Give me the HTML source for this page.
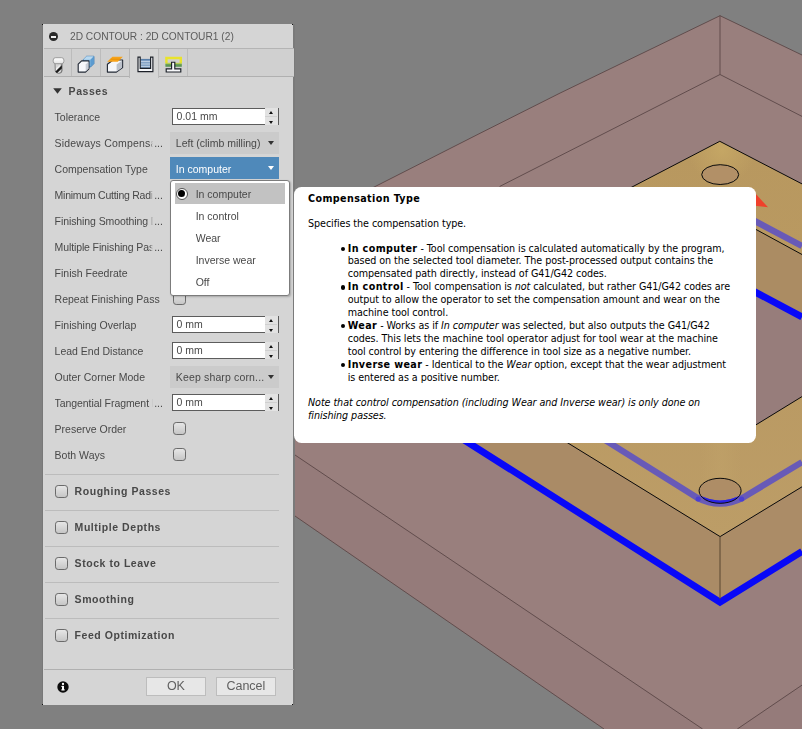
<!DOCTYPE html>
<html lang="en">
<head>
<meta charset="utf-8">
<title>2D Contour - Compensation Type</title>
<style>
*{box-sizing:border-box;margin:0;padding:0}
html,body{width:802px;height:729px;overflow:hidden;background:#808080}
body{position:relative;font-family:"Liberation Sans",Arial,sans-serif;font-size:10.5px;color:#484848}
#scene{position:absolute;left:0;top:0;width:802px;height:729px}
/* ---------- dialog ---------- */
#dlg{position:absolute;left:41.8px;top:24.2px;width:251.3px;height:680.8px;background:#d5d5d5;border-left:1px solid #787878;box-shadow:2px 0 0 #7a7a7a}
#in{position:absolute;left:1.2px;top:.8px;width:249.6px;height:679.5px;will-change:transform}
.dot{position:absolute;width:1.2px;height:1.2px;background:#111}
#title{position:absolute;left:0;top:0;width:100%;height:23.5px;border-bottom:1px solid #b4b4b4}
#title .min{position:absolute;left:5px;top:7.4px;width:9px;height:9px;border-radius:50%;background:#2a2a2a}
#title .min:after{content:"";position:absolute;left:1.9px;top:3.8px;width:5.2px;height:1.4px;background:#f2f2f2}
#title span{position:absolute;left:26px;top:5.8px;font-size:10.2px;color:#5c5c5c;white-space:nowrap}
#tabs{position:absolute;left:0;top:23.5px;width:100%;height:28.6px;background:#d0d0d0;border-bottom:1px solid #b0b0b0}
.tab{position:absolute;top:0;height:27.6px;width:29.3px;border-right:1px solid #bcbcbc}
.tab.act{background:#d5d5d5;height:29.6px;border-left:1px solid #b6b6b6;border-right:1px solid #bcbcbc}
.tab svg{position:absolute;left:0;top:0}
.sect{position:absolute;left:0;width:100%;font-weight:bold;font-size:10.5px;letter-spacing:.55px;color:#484848;white-space:nowrap}
.row{position:absolute;left:10.6px;white-space:nowrap;color:#484848;font-size:10.5px;line-height:12px}
.clip{display:inline-block;width:98px;height:13px;overflow:hidden;vertical-align:top;-webkit-mask-image:linear-gradient(to right,#000 95px,transparent 98px);mask-image:linear-gradient(to right,#000 95px,transparent 98px)}
.el{position:absolute;left:99.6px;top:0}
.sep{position:absolute;left:1px;width:234px;height:1px;background:#bcbcbc}
.num{position:absolute;left:128.2px;width:106.5px;height:16.6px;border-right:1px solid #5c5c5c;background:#e2e2e2}
.num:before{content:"";position:absolute;left:93.1px;top:8px;width:11.3px;height:1px;background:#d0d0d0}
.num i{position:absolute;left:0;top:0;width:93.1px;height:16.6px;background:#fff;border:1px solid #5c5c5c;border-right:0;font-style:normal;font-size:10.5px;line-height:15.4px;padding-left:3.4px;color:#484848}
.num b{position:absolute;left:96.6px;width:0;height:0;border-left:2.7px solid transparent;border-right:2.7px solid transparent}
.num b.u{top:2.4px;border-bottom:3.2px solid #111}
.num b.d{top:13.1px;border-top:3.2px solid #111}
.dd{position:absolute;left:125.8px;width:109px;height:22px;background:#cbcbcb;font-size:10.5px;line-height:22px;padding-top:.3px;padding-left:6px;overflow:hidden;color:#484848;white-space:nowrap}
.dd:after{content:"";position:absolute;left:98.2px;top:8.8px;border-left:3.2px solid transparent;border-right:3.2px solid transparent;border-top:4px solid #333}
.dd.sel{background:#4f89ba;color:#fff;padding-top:.9px}
.dd.sel:after{border-top-color:#fff}
.cb{position:absolute;width:13px;height:13px;border:1px solid #6a6a6a;border-radius:3.2px;background:linear-gradient(#e6e6e6,#c6c6c6)}
#pop{position:absolute;left:126.1px;top:155.4px;width:119.9px;height:115.3px;background:#fff;border:1px solid #7c7c7c;border-radius:3px;box-shadow:1px 1px 2px rgba(0,0,0,.22)}
#pop .hi{position:absolute;left:4.1px;top:2px;width:109.7px;height:21px;background:#c2c2c2}
#pop .it{position:absolute;left:24.6px;font-size:10.5px;line-height:12px;color:#484848;white-space:nowrap}
#pop .rad{position:absolute;left:4.8px;top:6.3px;width:12px;height:12px;border-radius:50%;border:1px solid #555;background:#fff}
#pop .rad:after{content:"";position:absolute;left:1.5px;top:1.5px;width:7px;height:7px;border-radius:50%;background:#000}
#foot{position:absolute;left:0;top:643.5px;width:100%;height:36px;border-top:1px solid #b0b0b0}
.btn{position:absolute;top:7.7px;height:18.6px;width:59.6px;margin-left:-.7px;background:#e7e7e7;border:1px solid #bdbdbd;font-size:12.5px;line-height:16.6px;text-align:center;color:#606060}
/* ---------- tooltip ---------- */
#tip{position:absolute;left:294.1px;top:187px;width:461.9px;height:256px;background:#fff;border-radius:7.5px;color:#000;font-family:"DejaVu Sans Condensed","DejaVu Sans","Liberation Sans",sans-serif;font-size:10.67px;line-height:12.9px;white-space:nowrap;letter-spacing:-.06px;font-stretch:condensed}
#tip div{position:absolute;left:13.9px;height:12.9px}
#tip .h{font-weight:bold;letter-spacing:.39px}
#tip b{letter-spacing:.39px}
#tip .li{left:53.6px}
#tip .bu{left:46.6px;width:4.6px;height:4.6px;border-radius:50%;background:#000}
#tip i{font-style:oblique}
</style>
</head>
<body>
<svg id="scene" viewBox="0 0 802 729">
<defs>
<linearGradient id="gTop" x1="0" x2="0" y1="141" y2="540" gradientUnits="userSpaceOnUse"><stop offset="0" stop-color="#b8985f"/><stop offset=".6" stop-color="#ba9a63"/><stop offset="1" stop-color="#bc9d67"/></linearGradient>
<radialGradient id="gHi" cx="722" cy="150" r="34" gradientUnits="userSpaceOnUse"><stop offset="0" stop-color="#c9ab66" stop-opacity=".75"/><stop offset="1" stop-color="#c9ab66" stop-opacity="0"/></radialGradient>
<linearGradient id="gStreak" x1="700" x2="742" y1="0" y2="0" gradientUnits="userSpaceOnUse"><stop offset="0" stop-color="#c4a76c" stop-opacity="0"/><stop offset=".5" stop-color="#c4a76c" stop-opacity=".3"/><stop offset="1" stop-color="#c4a76c" stop-opacity="0"/></linearGradient>
<clipPath id="cHole"><ellipse cx="720.1" cy="490.8" rx="21" ry="12.5"/></clipPath>
</defs>
<rect width="802" height="729" fill="#808080"/>
<!-- stock -->
<polygon points="720,15.7 802,55 802,729 604,729 60,354 60,347 375,186.6 480,133.3 560,93.1" fill="#997f7d"/>
<polygon points="60,297 702.6,729 604,729 60,354" fill="#957b7a"/>
<polygon points="737.3,729 802,685.1 802,729" fill="#957b7a"/>
<g stroke="#5b4747" stroke-width="1" fill="none" stroke-opacity=".9">
<path d="M60,347 L375,186.6 L480,133.3 L560,93.1 L720,15.7 L802,55"/>
<path d="M720,15.5 V74.5"/>
<path d="M499.6,186.5 L720,74.5 L802,116.4"/>
<path d="M60,297 L702.6,729"/>
<path d="M60,354 L604,729"/>
<path d="M737.3,729 L802,685.1"/>
</g>
<!-- part -->
<polygon points="719.8,141.3 802,183.9 802,486.8 720.1,536.6 400,339.7 400,308" fill="url(#gTop)"/>
<polygon points="719.8,141.3 802,183.9 802,230 640,230 640,183" fill="url(#gHi)"/>
<rect x="700" y="430" width="42" height="58" fill="url(#gStreak)"/>
<ellipse cx="720.1" cy="490.8" rx="21" ry="12.5" fill="#ae8d66"/>
<polygon points="400,339.7 720.1,536.6 720,602 400,399.4" fill="#aa8b66"/>
<polygon points="720.1,536.6 802,486.8 802,551.3 720,602" fill="#ab8c67"/>
<!-- pocket -->
<polygon points="750,226.2 802,254.5 802,320 750,292" fill="#ab8c63"/>
<polygon points="750,289.2 802,317 802,396.6 750,428.5" fill="#977d7b"/>
<!-- toolpaths -->
<path d="M700,192 L802,246" stroke="#685ab7" stroke-width="6.4" fill="none"/>
<path d="M560,411.9 L697,497.6 Q720,509.6 743,497.6 L802,462.2" stroke="#685ab7" stroke-width="6.3" fill="none" stroke-linejoin="round"/>
<g clip-path="url(#cHole)"><path d="M697,497.6 Q720,509.6 743,497.6" stroke="#2a22e6" stroke-width="6.3" fill="none"/></g>
<circle cx="698.2" cy="499" r="2.6" fill="#4a3fd2"/><circle cx="741.6" cy="499" r="2.6" fill="#4a3fd2"/>
<path d="M700,262.5 L802,317" stroke="#0808f8" stroke-width="7" fill="none"/>
<path d="M400,399.4 L720,602.2 L802,551.5" stroke="#0808f8" stroke-width="6.8" fill="none" stroke-miterlimit="10"/>
<polygon points="750,187.5 768,207.3 750,205.2" fill="#f0402a"/>
<!-- edges -->
<g stroke="#0a0a0a" stroke-width="1" fill="none">
<path d="M600,203.7 L719.8,141.3 L802,183.9"/>
<path d="M400,339.7 L720.1,536.6 L802,486.8"/>
<path d="M750,226.2 L802,254.5"/>
<path d="M750,428.5 L802,396.6"/>
<ellipse cx="720.2" cy="174.6" rx="18.5" ry="9.9" fill="#b29067"/>
<ellipse cx="720.1" cy="490.8" rx="21" ry="12.5" fill="none"/>
</g>
<path d="M720,536.6 V599" stroke="#5a4630" stroke-width="1"/>
</svg>
<div id="dlg">
<div class="dot" style="left:-1px;top:0"></div><div class="dot" style="right:0;top:0"></div><div class="dot" style="left:-1px;bottom:0"></div><div class="dot" style="right:0;bottom:0"></div>
<div id="in">
<div id="title"><div class="min"></div><span>2D CONTOUR : 2D CONTOUR1 (2)</span></div>
<div id="tabs">
<div class="tab" style="left:0px;width:27.5px"><svg width="29" height="28" viewBox="0 0 29 28"><defs><linearGradient id="t1" x1="0" x2="0" y1="0" y2="1"><stop offset="0" stop-color="#ffffff"/><stop offset="1" stop-color="#e4e4e4"/></linearGradient><linearGradient id="t2" x1="0" x2="1"><stop offset="0" stop-color="#fafafa"/><stop offset=".7" stop-color="#e2e2e2"/><stop offset="1" stop-color="#9a9a9a"/></linearGradient></defs><path d="M11.1,14.2 H18 V21.8 Q18,24.2 14.8,24.3 Q11.7,24.2 11.3,21.8 Z" fill="url(#t2)" stroke="#4a4a4a" stroke-width=".7"/><path d="M11.4,22.6 L17.8,16.2 V19.4 L13.2,24 Q11.9,23.8 11.4,22.6 Z" fill="#1a1a1a"/><path d="M12,15 L16.2,15 L12,19.4 Z" fill="#bdbdbd" opacity=".55"/><rect x="9.2" y="8.7" width="10.7" height="6" rx="2.4" fill="url(#t1)" stroke="#8c8c8c" stroke-width=".8"/></svg></div>
<div class="tab" style="left:27.5px;width:29.9px"><svg width="29" height="28" viewBox="0 0 29 28"><path d="M11.2,10.7 L14.6,7.3 H21.9 V14.6 L18.5,18 H11.2 Z" fill="#7db2dc" stroke="#2f71ad" stroke-width=".9" stroke-linejoin="round"/><path d="M11.2,10.7 L14.6,7.3 H21.9 L18.5,10.7 Z" fill="#b9d9f0"/><path d="M18.5,10.7 L21.9,7.3 V14.6 L18.5,18 Z" fill="#5c9bd0"/><path d="M6.2,15.2 L9.6,11.9 H16.9 V19.8 L13.5,23.1 H6.2 Z" fill="#f7f8fb" stroke="#232a36" stroke-width="1.15" stroke-linejoin="round"/><path d="M13.7,15.4 L16.5,12.6 V19.6 L13.7,22.4 Z" fill="#c9ced7"/></svg></div>
<div class="tab" style="left:57.4px;width:28.2px"><svg width="29" height="28" viewBox="0 0 29 28"><path d="M6.4,15.2 L12,11 H21.6 V18.6 L15.4,23.1 H6.4 Z" fill="#f5f6f9" stroke="#232a36" stroke-width="1.15" stroke-linejoin="round"/><path d="M15.6,15.5 L21.1,11.6 V18.4 L15.6,22.4 Z" fill="#bcc1ca"/><path d="M6.2,12.8 L11.4,7.8 H21.8 L16.8,12.8 Z" fill="#f7a21a"/><path d="M9.6,10.2 H19.2" stroke="#e58f06" stroke-width=".9"/></svg></div>
<div class="tab act" style="left:84.6px;width:30.4px"><svg width="31" height="28" viewBox="0 0 31 28"><rect x="10.5" y="10.2" width="9.8" height="9" fill="#7f9fc2"/><path d="M10.5,12.6 H20.3 M10.5,15 H20.3 M10.5,17.4 H20.3" stroke="#c9d8e8" stroke-width=".9"/><path d="M10.5,10.5 H20.3" stroke="#5a7fa8" stroke-width="1.2"/><path d="M8,8.1 H10.2 V19.3 H20.6 V8.1 H22.9 V22.6 H8 Z" fill="#f6f7f9" stroke="#1c2028" stroke-width="1.15" stroke-linejoin="miter"/></svg></div>
<div class="tab" style="left:114.8px;width:28.9px"><svg width="29" height="28" viewBox="0 0 29 28"><path d="M7.4,14 V9 H21.8 V14" fill="none" stroke="#e9e32c" stroke-width="2.4"/><rect x="6.4" y="15" width="16.4" height="2.8" fill="#5c9656"/><rect x="6.4" y="13.8" width="16.4" height="1.4" fill="#b5cc52"/><path d="M12.6,13.2 H15.8 V19.8 H21.8 V23 H7.2 V19.8 H12.6 Z" fill="#f6f7f9" stroke="#1c2028" stroke-width="1.15"/></svg></div>
</div>
<div class="sect" style="top:59.6px"><svg width="10" height="7" style="position:absolute;left:9.2px;top:3.6px"><path d="M0.2,0.3 H8.8 L4.5,5.8 Z" fill="#333"/></svg><span style="position:absolute;left:24.6px;top:0">Passes</span></div>
<div class="row" style="top:86.3px">Tolerance</div>
<div class="num" style="top:83.2px"><i>0.01 mm</i><b class="u"></b><b class="d"></b></div>
<div class="row" style="top:112.3px"><span class="clip" style="letter-spacing:0.19px">Sideways Compensa</span><span class="el">...</span></div>
<div class="dd" style="top:106.9px">Left (climb milling)</div>
<div class="row" style="top:138.3px">Compensation Type</div>
<div class="dd sel" style="top:132.2px">In computer</div>
<div class="row" style="top:164.3px"><span class="clip" style="letter-spacing:-0.25px">Minimum Cutting Radi</span><span class="el">...</span></div>
<div class="row" style="top:190.3px"><span class="clip" style="letter-spacing:-0.09px">Finishing Smoothing D</span><span class="el">...</span></div>
<div class="row" style="top:216.3px"><span class="clip" style="letter-spacing:-0.12px">Multiple Finishing Pass</span><span class="el">...</span></div>
<div class="row" style="top:242.3px">Finish Feedrate</div>
<div class="row" style="top:268.3px">Repeat Finishing Pass</div>
<div class="cb" style="left:128.5px;top:267.4px"></div>
<div class="row" style="top:294.3px">Finishing Overlap</div>
<div class="num" style="top:291.2px"><i>0 mm</i><b class="u"></b><b class="d"></b></div>
<div class="row" style="top:320.3px">Lead End Distance</div>
<div class="num" style="top:317.2px"><i>0 mm</i><b class="u"></b><b class="d"></b></div>
<div class="row" style="top:346.3px">Outer Corner Mode</div>
<div class="dd" style="top:340.9px;letter-spacing:.15px">Keep sharp corn...</div>
<div class="row" style="top:372.3px"><span class="clip" style="letter-spacing:-0.07px">Tangential Fragment E</span><span class="el">...</span></div>
<div class="num" style="top:369.2px"><i>0 mm</i><b class="u"></b><b class="d"></b></div>
<div class="row" style="top:398.3px">Preserve Order</div>
<div class="cb" style="left:128.5px;top:397.4px"></div>
<div class="row" style="top:424.3px">Both Ways</div>
<div class="cb" style="left:128.5px;top:423.4px"></div>
<div class="sep" style="top:449.2px"></div>
<div class="cb" style="left:10.6px;top:459.6px"></div>
<div class="sect" style="top:459.8px"><span style="position:absolute;left:30.6px;top:0">Roughing Passes</span></div>
<div class="sep" style="top:485.2px"></div>
<div class="cb" style="left:10.6px;top:495.6px"></div>
<div class="sect" style="top:495.8px"><span style="position:absolute;left:30.6px;top:0">Multiple Depths</span></div>
<div class="sep" style="top:521.2px"></div>
<div class="cb" style="left:10.6px;top:531.6px"></div>
<div class="sect" style="top:531.8px"><span style="position:absolute;left:30.6px;top:0">Stock to Leave</span></div>
<div class="sep" style="top:557.2px"></div>
<div class="cb" style="left:10.6px;top:567.6px"></div>
<div class="sect" style="top:567.8px"><span style="position:absolute;left:30.6px;top:0">Smoothing</span></div>
<div class="sep" style="top:593.2px"></div>
<div class="cb" style="left:10.6px;top:603.6px"></div>
<div class="sect" style="top:603.8px"><span style="position:absolute;left:30.6px;top:0">Feed Optimization</span></div>
<div id="pop"><div class="hi"></div><div class="rad"></div>
<div class="it" style="top:6.4px">In computer</div>
<div class="it" style="top:28.5px">In control</div>
<div class="it" style="top:50.6px">Wear</div>
<div class="it" style="top:72.7px">Inverse wear</div>
<div class="it" style="top:94.8px">Off</div>
</div>
<div id="foot"><svg width="12" height="12" viewBox="0 0 12 12" style="position:absolute;left:13.1px;top:11.8px"><circle cx="6" cy="6" r="5.7" fill="#0c0c0c"/><rect x="5" y="4.9" width="2" height="4.3" fill="#fff"/><rect x="4.3" y="4.9" width="1.6" height="1" fill="#fff"/><rect x="4.2" y="8.4" width="3.6" height="1" fill="#fff"/><circle cx="6" cy="3" r="1.15" fill="#fff"/></svg><div class="btn" style="left:102.8px">OK</div><div class="btn" style="left:172.8px">Cancel</div></div>
</div>
</div>
<div id="tip">
<div class="h" style="top:5.8px">Compensation Type</div>
<div style="top:31.4px">Specifies the compensation type.</div>
<div class="bu" style="top:59.5px"></div>
<div class="li" style="top:55.5px"><b>In computer</b> - Tool compensation is calculated automatically by the program,</div>
<div class="li" style="top:68.4px">based on the selected tool diameter. The post-processed output contains the</div>
<div class="li" style="top:81.3px">compensated path directly, instead of G41/G42 codes.</div>
<div class="bu" style="top:98.2px"></div>
<div class="li" style="top:94.2px"><b>In control</b> - Tool compensation is <i>not</i> calculated, but rather G41/G42 codes are</div>
<div class="li" style="top:107.1px">output to allow the operator to set the compensation amount and wear on the</div>
<div class="li" style="top:120.0px">machine tool control.</div>
<div class="bu" style="top:136.9px"></div>
<div class="li" style="top:132.9px"><b>Wear</b> - Works as if <i>In computer</i> was selected, but also outputs the G41/G42</div>
<div class="li" style="top:145.8px">codes. This lets the machine tool operator adjust for tool wear at the machine</div>
<div class="li" style="top:158.7px">tool control by entering the difference in tool size as a negative number.</div>
<div class="bu" style="top:175.6px"></div>
<div class="li" style="top:171.6px"><b>Inverse wear</b> - Identical to the <i>Wear</i> option, except that the wear adjustment</div>
<div class="li" style="top:184.5px">is entered as a positive number.</div>
<div style="top:210.4px"><i>Note that control compensation (including Wear and Inverse wear) is only done on</i></div>
<div style="top:223.2px"><i>finishing passes.</i></div>
</div>
</body>
</html>
